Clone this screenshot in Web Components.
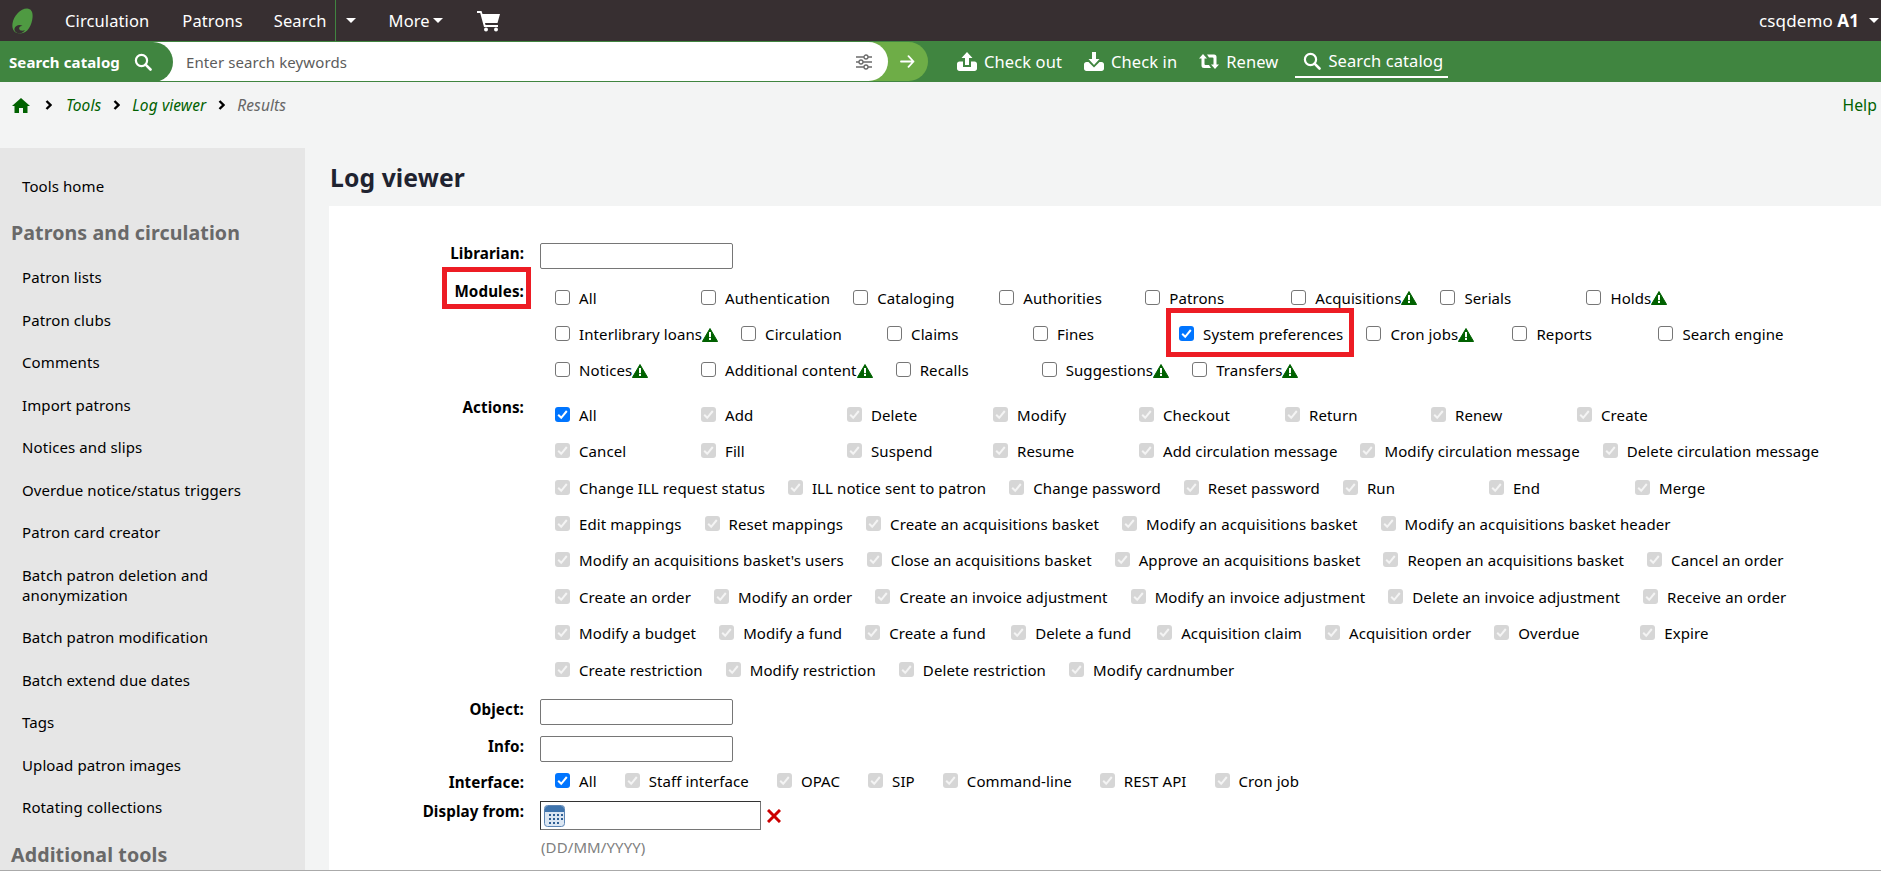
<!DOCTYPE html>
<html lang="en">
<head>
<meta charset="utf-8">
<title>Log viewer</title>
<style>
    html, body { margin: 0; height: 875px; overflow: hidden; background: #fff; }
    body { font-family: "Noto Sans", "Open Sans", sans-serif; font-size: 15px; letter-spacing: .1px; color: #000; }
</style>
</head>
<body>
<koha-topbar></koha-topbar>
<koha-searchbar></koha-searchbar>
<koha-crumbs></koha-crumbs>
<koha-layout>
    <koha-sidebar slot="side"></koha-sidebar>
    <log-form slot="main"></log-form>
</koha-layout>

<script>
const WARN_ICON = `<svg width="16" height="14" viewBox="0 0 16 14"><path d="M8 .5 15.6 13.5H.4Z" fill="#006100" stroke="#006100" stroke-linejoin="round"/><rect x="7" y="4" width="2" height="5.2" fill="#fff"/><rect x="7" y="10" width="2" height="2" fill="#fff"/></svg>`;
const SEARCH_ICON = `<svg width="18" height="18" viewBox="0 0 18 18" fill="none" stroke="#fff"><circle cx="7.5" cy="7.5" r="5.6" stroke-width="2.2"/><path d="M11.6 11.6 16.5 16.5" stroke-width="2.6" stroke-linecap="round"/></svg>`;

class KohaTopbar extends HTMLElement {
    constructor() {
        super();
        this.attachShadow({mode: 'open'});
    }
    connectedCallback() {
        this.shadowRoot.innerHTML = `
        <style>
            :host { display: flex; align-items: center; height: 41px; background: #372f31; color: #fff; font-size: 16.5px; }
            svg { display: block; }
            .logo { margin-left: 12px; margin-right: 32px; }
            nav { display: flex; align-items: center; height: 100%; }
            .link { margin-right: 31px; }
            .link:first-child { margin-right: 33px; }
            .split { display: flex; align-items: center; height: 100%; border-left: 1px solid #408540; margin-left: -23px; padding-left: 10px; margin-right: 33px; }
            .more { display: flex; align-items: center; gap: 3px; margin-right: 34px; }
            .caret { width: 0; height: 0; border: 5px solid transparent; border-top: 5px solid #fff; border-bottom: 0; }
            .user { margin-left: auto; display: flex; align-items: center; gap: 5px; margin-right: 2px; font-size: 17px; }
            .user .caret { margin-left: 5px; }
            b { font-weight: 700; }
        </style>
        <svg class="logo" width="21" height="26" viewBox="0 0 21 26"><path d="M15 .5C19 .5 21 4 20.6 9 20 17 15.500 25.500 8.500 25.500 5 25.500 3 24.500 2 23 .7 21 0 19 .5 15.500 1.500 8 8.500.5 15 .5Z" fill="#4f9a42"/><path d="M2.500 20.500C3.500 17 8 16 10.500 18 8 18 6.500 19.500 7.500 21.500 8.500 23 11 23 13 22 11 25 8 26 5.500 25 3.500 24 2 22.500 2.500 20.500Z" fill="#372f31"/></svg>
        <nav>
            <span class="link">Circulation</span>
            <span class="link">Patrons</span>
            <span class="link">Search</span>
            <span class="split"><span class="caret"></span></span>
            <span class="more">More <span class="caret"></span></span>
            <svg width="24" height="22" viewBox="0 0 24 22" fill="#fff"><path d="M0 1h4.500l1 3H23l-2.500 9H8l.5 2H21v2H7L3.200 3H0Z"/><circle cx="9" cy="19.500" r="2"/><circle cx="19" cy="19.500" r="2"/></svg>
        </nav>
        <div class="user"><span>csqdemo <b>A1</b></span><span class="caret"></span></div>`;
    }
}

class KohaSearchbar extends HTMLElement {
    constructor() {
        super();
        this.attachShadow({mode: 'open'});
    }
    connectedCallback() {
        this.shadowRoot.innerHTML = `
        <style>
            :host { display: flex; align-items: center; height: 41px; background: #408540; color: #fff; }
            svg { display: block; }
            .tab { position: relative; z-index: 2; display: flex; align-items: center; gap: 14px; box-sizing: border-box; width: 173px; height: 40px; padding-left: 9px; background: #408540; border-radius: 0 20px 20px 0; font-weight: 700; font-size: 15px; }
            .input { position: relative; z-index: 1; display: flex; align-items: center; justify-content: space-between; box-sizing: border-box; width: 742px; height: 39px; margin-left: -27px; padding: 0 15px 0 40px; background: #fff; border-radius: 0 20px 20px 0; color: #5c5c5c; }
            .go { display: flex; align-items: center; box-sizing: border-box; width: 60px; height: 39px; margin-left: -20px; padding-left: 32px; background: #6ead47; border-radius: 0 20px 20px 0; }
            nav { display: flex; align-items: center; margin-left: 29px; font-size: 16.5px; }
            .item { display: flex; align-items: center; gap: 7px; margin-right: 22px; }
            .item.on { margin-right: 0; margin-left: -5px; padding: 0 5px 0 8px; height: 32px; border-bottom: 2px solid #fff; box-sizing: border-box; }
        </style>
        <div class="tab"><span>Search catalog</span>${SEARCH_ICON}</div>
        <div class="input"><span>Enter search keywords</span>
            <svg width="18" height="16" viewBox="0 0 18 16" fill="none" stroke="#6b6b6b" stroke-width="1.300"><path d="M1 3h16M1 8h16M1 13h16"/><circle cx="11" cy="3" r="2" fill="#fff"/><circle cx="6" cy="8" r="2" fill="#fff"/><circle cx="11" cy="13" r="2" fill="#fff"/></svg>
        </div>
        <div class="go"><svg width="15" height="13" viewBox="0 0 15 13" fill="none" stroke="#fff" stroke-width="1.800" stroke-linecap="round" stroke-linejoin="round"><path d="M1 6.500h12.500M8.500 1.200l5 5.300-5 5.300"/></svg></div>
        <nav>
            <span class="item"><svg width="20" height="19" viewBox="0 0 20 19" fill="#fff"><path d="M10 0l5.500 6H12v7H8V6H4.500Z"/><path d="M6 9.500H2.500C1 9.500 0 10.500 0 12v4.500C0 18 1 19 2.500 19h15c1.500 0 2.500-1 2.500-2.500V12c0-1.500-1-2.500-2.500-2.500H14V15H6Z"/></svg>Check out</span>
            <span class="item"><svg width="20" height="19" viewBox="0 0 20 19" fill="#fff"><path d="M8 0h4v7h3.500L10 13 4.500 7H8Z"/><path d="M4.500 10H2.500C1 10 0 11 0 12.500v4C0 18 1 19 2.500 19h15c1.500 0 2.500-1 2.500-2.500v-4c0-1.500-1-2.500-2.500-2.500h-2L10 15.500Z"/></svg>Check in</span>
            <span class="item"><svg width="20" height="15" viewBox="0 0 20 15" fill="#fff"><path d="M4 0l4 4.500H5.500V10a1 1 0 0 0 1 1H10l2 3H5a2.500 2.500 0 0 1-2.500-2.500V4.500H0Z"/><path d="M16 15l4-4.500h-2.500V3A2.500 2.500 0 0 0 15 .5H8l2 3h3.500a1 1 0 0 1 1 1V10.500H12Z"/></svg>Renew</span>
            <span class="item on">${SEARCH_ICON}Search catalog</span>
        </nav>`;
    }
}

class KohaCrumbs extends HTMLElement {
    constructor() {
        super();
        this.attachShadow({mode: 'open'});
    }
    connectedCallback() {
        const sep = `<svg class="sep" width="7" height="10" viewBox="0 0 7 10" fill="none" stroke="#000" stroke-width="2.400"><path d="M1.500 1l4 4-4 4"/></svg>`;
        this.shadowRoot.innerHTML = `
        <style>
            :host { display: flex; align-items: center; box-sizing: border-box; height: 66px; padding: 0 4px 20px 12px; background: #f3f4f4; font-size: 15.5px; }
            svg { display: block; }
            span { font-style: italic; color: #006100; }
            .home { margin-right: 3px; }
            .sep { margin: 0 12px; }
            .home + .sep { margin-right: 14px; }
            .cur { color: #666; }
            .help { margin-left: auto; font-style: normal; font-size: 15.7px; }
        </style>
        <svg class="home" width="18" height="15" viewBox="0 0 18 15" fill="#006100"><path d="M9 0 18 8h-2.500v7H11v-5H7v5H2.500V8H0Z"/></svg>
        ${sep}<span>Tools</span>${sep}<span>Log viewer</span>${sep}<span class="cur">Results</span>
        <span class="help">Help</span>`;
    }
}

class KohaLayout extends HTMLElement {
    constructor() {
        super();
        this.attachShadow({mode: 'open'});
        this.shadowRoot.innerHTML = `
        <style>
            :host { display: flex; height: 722px; background: #f3f4f4; border-bottom: 1px solid #aaa; overflow: hidden; }
            .side { flex: 0 0 305px; }
            .main { flex: 1; min-width: 0; padding-left: 24px; }
            h1 { margin: 16px 0 0 1px; height: 42px; font-size: 24.7px; line-height: 28px; font-weight: 700; color: #1f2330; }
        </style>
        <div class="side"><slot name="side"></slot></div>
        <div class="main"><h1>Log viewer</h1><slot name="main"></slot></div>`;
    }
}

class KohaSidebar extends HTMLElement {
    constructor() {
        super();
        this.attachShadow({mode: 'open'});
    }
    connectedCallback() {
        const groups = [
            [null, ['Tools home']],
            ['Patrons and circulation', ['Patron lists', 'Patron clubs', 'Comments', 'Import patrons', 'Notices and slips', 'Overdue notice/status triggers', 'Patron card creator', 'Batch patron deletion and anonymization', 'Batch patron modification', 'Batch extend due dates', 'Tags', 'Upload patron images', 'Rotating collections']],
            ['Additional tools', []]
        ];
        const html = groups.map(([title, items]) => `
            ${title ? `<h5>${title}</h5>` : ''}
            <ul>${items.map(i => `<li>${i}</li>`).join('')}</ul>`).join('');
        this.shadowRoot.innerHTML = `
        <style>
            :host { display: block; box-sizing: border-box; height: 722px; padding-top: 16px; background: #e6e6e6; }
            h5 { margin: 0; padding: 14px 0 0 11px; height: 35px; font-size: 19.6px; line-height: 24px; font-weight: 700; color: #696969; }
            h5:last-of-type { padding-top: 15px; }
            ul { margin: 0; padding: 0; list-style: none; }
            li { padding: 11.500px 20px 11px 22px; line-height: 20px; }
        </style>${html}`;
    }
}

class CheckItem extends HTMLElement {
    constructor() {
        super();
        this.attachShadow({mode: 'open'});
    }
    connectedCallback() {
        const checked = this.hasAttribute('checked');
        const disabled = this.hasAttribute('disabled');
        this.shadowRoot.innerHTML = `
        <style>
            :host { display: flex; align-items: center; position: relative; height: 36.400px; margin-right: 23px; line-height: 19px; }
            :host([compact]) { height: 19px; margin-right: 28px; }
            .box { position: relative; width: 15px; height: 15px; margin: -2px 9px 0 0; flex: none; }
            input { appearance: none; display: block; box-sizing: border-box; width: 15px; height: 15px; margin: 0; border: 1px solid #767676; border-radius: 3px; background: #fff; }
            input:checked { border: 0; background: #0075ff; }
            input:disabled { border: 0; background: #d6d6d6; }
            .box svg { position: absolute; left: 0; top: 0; }
            label { display: inline-flex; align-items: center; min-width: 99px; white-space: nowrap; }
            :host([compact]) label { min-width: 0; }
            .mark { position: absolute; left: -13.500px; top: -8px; box-sizing: border-box; width: 188.500px; height: 49px; border: 5px solid #ed1c24; pointer-events: none; }
            .warn { display: block; }
        </style>
        <span class="box">
            <input type="checkbox" ${checked ? 'checked' : ''} ${disabled ? 'disabled' : ''}>
            ${checked ? `<svg width="15" height="15" viewBox="0 0 15 15" fill="none" stroke="${disabled ? '#f4f4f4' : '#fff'}" stroke-width="2"><path d="M3.200 7.800 6.200 10.800 11.800 4"/></svg>` : ''}
        </span>
        <label>${this.getAttribute('label')}${this.hasAttribute('warn') ? WARN_ICON.replace('<svg', '<svg class="warn"') : ''}</label>
        ${this.hasAttribute('boxed') ? '<span class="mark"></span>' : ''}`;
    }
}

class CheckGroup extends HTMLElement {
    constructor() {
        super();
        this.attachShadow({mode: 'open'});
        this.shadowRoot.innerHTML = `
        <style>
            :host { display: flex; flex-wrap: wrap; flex: 1; padding-left: 15px; }
        </style>
        <slot></slot>`;
    }
}

class FormRow extends HTMLElement {
    constructor() {
        super();
        this.attachShadow({mode: 'open'});
    }
    connectedCallback() {
        this.shadowRoot.innerHTML = `
        <style>
            :host { display: flex; align-items: flex-start; position: relative; }
            .lbl { position: relative; flex: none; width: 195px; margin-right: 16px; padding-top: 1px; text-align: right; font-weight: 700; font-size: 15.2px; line-height: 19px; }
            .mark { position: absolute; right: -7px; top: -14px; box-sizing: border-box; width: 89px; height: 42px; border: 5px solid #ed1c24; }
            .body { flex: 1; display: flex; min-width: 0; }
        </style>
        <div class="lbl">${this.getAttribute('label')}${this.hasAttribute('boxed') ? '<span class="mark"></span>' : ''}</div>
        <div class="body"><slot></slot></div>`;
    }
}

class DateField extends HTMLElement {
    constructor() {
        super();
        this.attachShadow({mode: 'open'});
        this.shadowRoot.innerHTML = `
        <style>
            :host { display: block; }
            .line { display: flex; align-items: center; gap: 6px; }
            .field { position: relative; display: block; width: 221px; height: 29px; }
            input { display: block; box-sizing: border-box; width: 100%; height: 100%; margin: 0; border: 1px solid #767676; border-top-color: #333; border-left-color: #333; background: #fff; }
            .cal { position: absolute; left: 4px; top: 4px; }
            .hint { margin: 8px 0 0 1px; line-height: 19px; color: #808080; }
        </style>
        <div class="line">
            <span class="field"><input type="text">
                <svg class="cal" width="21" height="22" viewBox="0 0 21 22"><rect x=".5" y=".5" width="20" height="21" rx="3" fill="#dbe6f2" stroke="#5c85b4"/><path d="M1 4a3 3 0 0 1 3-3h13a3 3 0 0 1 3 3v3H1Z" fill="#3f74ad"/><g fill="#2f5f94"><rect x="5" y="9" width="2" height="2"/><rect x="9" y="9" width="2" height="2"/><rect x="13" y="9" width="2" height="2"/><rect x="17" y="9" width="2" height="2"/><rect x="5" y="13" width="2" height="2"/><rect x="9" y="13" width="2" height="2"/><rect x="13" y="13" width="2" height="2"/><rect x="17" y="13" width="2" height="2"/><rect x="5" y="17" width="2" height="2"/><rect x="9" y="17" width="2" height="2"/><rect x="13" y="17" width="2" height="2"/></g></svg>
            </span>
            <svg width="14" height="14" viewBox="0 0 14 14" stroke="#cc0000" stroke-width="3"><path d="M1 1l12 12M13 1 1 13"/></svg>
        </div>
        <div class="hint">(DD/MM/YYYY)</div>`;
    }
}

class LogForm extends HTMLElement {
    constructor() {
        super();
        this.attachShadow({mode: 'open'});
    }
    connectedCallback() {
        const modules = ['All', 'Authentication', 'Cataloging', 'Authorities', 'Patrons', 'Acquisitions!', 'Serials', 'Holds!', 'Interlibrary loans!', 'Circulation', 'Claims', 'Fines', 'System preferences*', 'Cron jobs!', 'Reports', 'Search engine', 'Notices!', 'Additional content!', 'Recalls', 'Suggestions!', 'Transfers!'];
        const actions = ['All', 'Add', 'Delete', 'Modify', 'Checkout', 'Return', 'Renew', 'Create', 'Cancel', 'Fill', 'Suspend', 'Resume', 'Add circulation message', 'Modify circulation message', 'Delete circulation message', 'Change ILL request status', 'ILL notice sent to patron', 'Change password', 'Reset password', 'Run', 'End', 'Merge', 'Edit mappings', 'Reset mappings', 'Create an acquisitions basket', 'Modify an acquisitions basket', 'Modify an acquisitions basket header', "Modify an acquisitions basket's users", 'Close an acquisitions basket', 'Approve an acquisitions basket', 'Reopen an acquisitions basket', 'Cancel an order', 'Create an order', 'Modify an order', 'Create an invoice adjustment', 'Modify an invoice adjustment', 'Delete an invoice adjustment', 'Receive an order', 'Modify a budget', 'Modify a fund', 'Create a fund', 'Delete a fund', 'Acquisition claim', 'Acquisition order', 'Overdue', 'Expire', 'Create restriction', 'Modify restriction', 'Delete restriction', 'Modify cardnumber'];
        const interfaces = ['All', 'Staff interface', 'OPAC', 'SIP', 'Command-line', 'REST API', 'Cron job'];

        const moduleItems = modules.map(m => {
            const warn = m.endsWith('!');
            const boxed = m.endsWith('*');
            const name = m.replace(/[!*]$/, '');
            return `<check-item label="${name}" ${warn ? 'warn' : ''} ${boxed ? 'boxed checked' : ''}></check-item>`;
        }).join('');
        const sub = (list, extra) => list.map((a, i) => `<check-item label="${a}" ${extra} ${i === 0 ? 'checked' : 'checked disabled'}></check-item>`).join('');

        this.shadowRoot.innerHTML = `
        <style>
            :host { display: block; box-sizing: border-box; height: 664px; padding: 37px 31px 0 0; background: #fff; }
            .text { display: block; box-sizing: border-box; width: 193px; height: 26px; margin: 0; border: 1px solid #767676; border-radius: 2px; background: #fff; }
            .modules { margin-top: 12px; }
            .actions { margin-top: 8px; }
            .object { margin-top: 11px; }
            .info { margin-top: 11px; }
            .iface { margin-top: 10px; }
            .from { margin-top: 9px; }
        </style>
        <form-row label="Librarian:"><input class="text" type="text"></form-row>
        <form-row class="modules" label="Modules:" boxed><check-group style="margin-top:-1px">${moduleItems}</check-group></form-row>
        <form-row class="actions" label="Actions:"><check-group>${sub(actions, '')}</check-group></form-row>
        <form-row class="object" label="Object:"><input class="text" type="text"></form-row>
        <form-row class="info" label="Info:"><input class="text" type="text"></form-row>
        <form-row class="iface" label="Interface:"><check-group>${sub(interfaces, 'compact')}</check-group></form-row>
        <form-row class="from" label="Display from:"><date-field></date-field></form-row>`;
    }
}

customElements.define('koha-topbar', KohaTopbar);
customElements.define('koha-searchbar', KohaSearchbar);
customElements.define('koha-crumbs', KohaCrumbs);
customElements.define('koha-layout', KohaLayout);
customElements.define('koha-sidebar', KohaSidebar);
customElements.define('check-item', CheckItem);
customElements.define('check-group', CheckGroup);
customElements.define('form-row', FormRow);
customElements.define('date-field', DateField);
customElements.define('log-form', LogForm);
</script>
</body>
</html>
